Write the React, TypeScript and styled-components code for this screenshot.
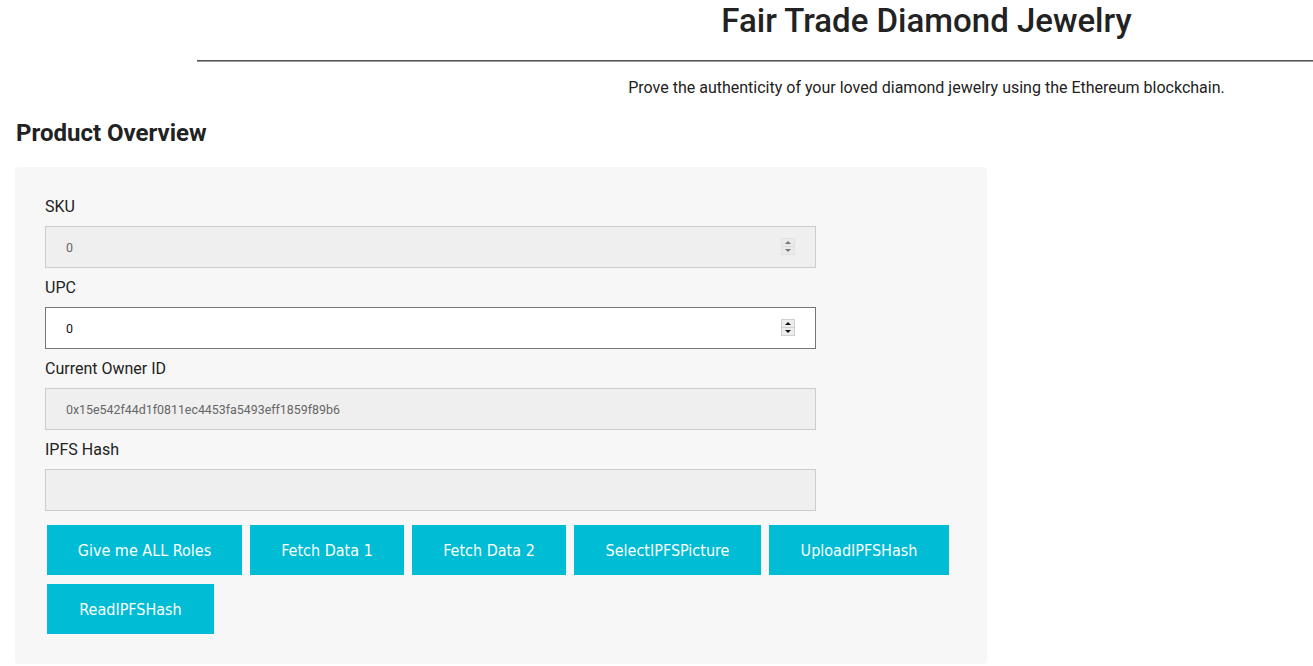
import React from "react";
import styled, { createGlobalStyle } from "styled-components";

const Global = createGlobalStyle`
  html, body { margin: 0; padding: 0; background: #fff; }
  body { font-family: Roboto, "Liberation Sans", sans-serif; color: #212121; }
  * { box-sizing: border-box; }
  input[type=number]::-webkit-inner-spin-button,
  input[type=number]::-webkit-outer-spin-button { -webkit-appearance: none; margin: 0; }
`;

const Page = styled.div`
  width: 1313px;
  padding: 0 0 0 15px;
`;

const Header = styled.header`
  display: flex;
  flex-direction: column;
  align-items: stretch;
`;

const Title = styled.h1`
  margin: 0;
  padding: 2px 0 0 525px;
  text-align: center;
  font-size: 33px;
  line-height: 37px;
  font-weight: 500;
  color: #222;
`;

const Rule = styled.hr`
  margin: 21px 0 0 182px;
  border: none;
  border-top: 1px solid #555;
  border-bottom: 1px solid #999;
  height: 0;
`;

const Subtitle = styled.p`
  margin: 16px 0 0;
  padding-left: 525px;
  text-align: center;
  font-size: 16px;
  line-height: 20px;
  color: #222;
`;

const SectionTitle = styled.h2`
  margin: 20px 0 0 1px;
  font-size: 24px;
  line-height: 30px;
  font-weight: 700;
  color: #222;
`;

const Panel = styled.section`
  margin-top: 19px;
  width: 972px;
  background: #f7f7f7;
  border-radius: 4px;
  padding: 30px;
`;

const Field = styled.div`
  display: flex;
  flex-direction: column;
`;

const Label = styled.label`
  font-size: 16px;
  line-height: 19px;
  color: #222;
  margin-bottom: 10px;
`;

const InputWrap = styled.div`
  position: relative;
  width: 771px;
  height: 42px;
  margin: 0 0 10px;
`;

const Input = styled.input<{ $active?: boolean }>`
  width: 100%;
  height: 100%;
  margin: 0;
  padding: 0 20px;
  font-family: Roboto, "Liberation Sans", sans-serif;
  font-size: 12.4px;
  color: ${(p) => (p.$active ? "#111" : "#666")};
  background: ${(p) => (p.$active ? "#fff" : "#efefef")};
  border: 1px solid ${(p) => (p.$active ? "#767676" : "#ccc")};
  border-radius: 0;
  outline: none;
  -moz-appearance: textfield;
`;

const Spinner = styled.div<{ $active?: boolean }>`
  position: absolute;
  right: 21px;
  top: 12px;
  width: 14px;
  height: 17px;
  display: flex;
  flex-direction: column;
  border: 1px solid ${(p) => (p.$active ? "#cfcfcf" : "#e2e2e2")};
  background: ${(p) => (p.$active ? "#ececec" : "#eaeaea")};
`;

const SpinHalf = styled.div<{ $down?: boolean; $active?: boolean }>`
  flex: 1;
  display: flex;
  align-items: center;
  justify-content: center;
  border-top: ${(p) => (p.$down ? `1px solid ${p.$active ? "#cfcfcf" : "#dcdcdc"}` : "none")};
  &::after {
    content: "";
    width: 0;
    height: 0;
    border-left: 3px solid transparent;
    border-right: 3px solid transparent;
    ${(p) =>
      p.$down
        ? `border-top: 3px solid ${p.$active ? "#111" : "#777"};`
        : `border-bottom: 3px solid ${p.$active ? "#111" : "#777"};`}
  }
`;

const Buttons = styled.div`
  display: flex;
  flex-wrap: wrap;
  gap: 9px 8px;
  margin: 4px 0 0 2px;
  width: 940px;
`;

const Button = styled.button<{ $w: number }>`
  width: ${(p) => p.$w}px;
  height: 50px;
  border: none;
  border-radius: 0;
  background: #00bcd4;
  color: #fff;
  font-family: "DejaVu Sans Condensed", "DejaVu Sans", sans-serif;
  font-size: 16px;
  cursor: pointer;
`;

const buttons: [string, number][] = [
  ["Give me ALL Roles", 195],
  ["Fetch Data 1", 154],
  ["Fetch Data 2", 154],
  ["SelectIPFSPicture", 187],
  ["UploadIPFSHash", 180],
  ["ReadIPFSHash", 167],
];

function NumberField({ label, active }: { label: string; active?: boolean }) {
  return (
    <Field>
      <Label>{label}</Label>
      <InputWrap>
        <Input type="number" defaultValue={0} disabled={!active} $active={active} />
        <Spinner $active={active}>
          <SpinHalf $active={active} />
          <SpinHalf $down $active={active} />
        </Spinner>
      </InputWrap>
    </Field>
  );
}

function TextField({ label, value }: { label: string; value: string }) {
  return (
    <Field>
      <Label>{label}</Label>
      <InputWrap>
        <Input type="text" defaultValue={value} disabled />
      </InputWrap>
    </Field>
  );
}

export default function App() {
  return (
    <Page>
      <Global />
      <Header>
        <Title>Fair Trade Diamond Jewelry</Title>
        <Rule />
        <Subtitle>Prove the authenticity of your loved diamond jewelry using the Ethereum blockchain.</Subtitle>
      </Header>
      <SectionTitle>Product Overview</SectionTitle>
      <Panel>
        <NumberField label="SKU" />
        <NumberField label="UPC" active />
        <TextField label="Current Owner ID" value="0x15e542f44d1f0811ec4453fa5493eff1859f89b6" />
        <TextField label="IPFS Hash" value="" />
        <Buttons>
          {buttons.map(([t, w]) => (
            <Button key={t} $w={w}>{t}</Button>
          ))}
        </Buttons>
      </Panel>
    </Page>
  );
}
